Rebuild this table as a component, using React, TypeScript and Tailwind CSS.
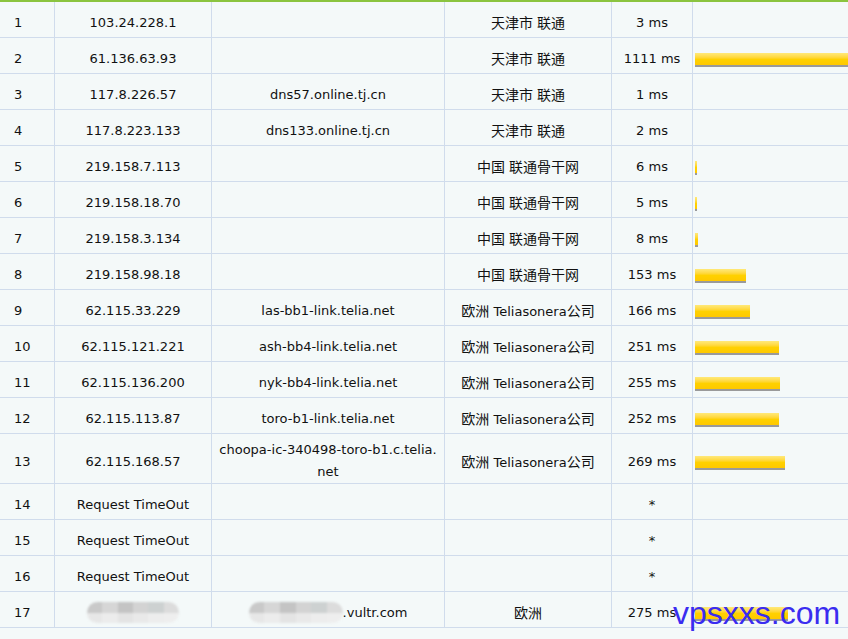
import React from "react";

type Row = { n: number; ip: React.ReactNode; host: React.ReactNode; loc: string; ms: number | null; tall?: boolean };

const rows: Row[] = [
  { n: 1, ip: "103.24.228.1", host: "", loc: "天津市 联通", ms: 3 },
  { n: 2, ip: "61.136.63.93", host: "", loc: "天津市 联通", ms: 1111 },
  { n: 3, ip: "117.8.226.57", host: "dns57.online.tj.cn", loc: "天津市 联通", ms: 1 },
  { n: 4, ip: "117.8.223.133", host: "dns133.online.tj.cn", loc: "天津市 联通", ms: 2 },
  { n: 5, ip: "219.158.7.113", host: "", loc: "中国 联通骨干网", ms: 6 },
  { n: 6, ip: "219.158.18.70", host: "", loc: "中国 联通骨干网", ms: 5 },
  { n: 7, ip: "219.158.3.134", host: "", loc: "中国 联通骨干网", ms: 8 },
  { n: 8, ip: "219.158.98.18", host: "", loc: "中国 联通骨干网", ms: 153 },
  { n: 9, ip: "62.115.33.229", host: "las-bb1-link.telia.net", loc: "欧洲 Teliasonera公司", ms: 166 },
  { n: 10, ip: "62.115.121.221", host: "ash-bb4-link.telia.net", loc: "欧洲 Teliasonera公司", ms: 251 },
  { n: 11, ip: "62.115.136.200", host: "nyk-bb4-link.telia.net", loc: "欧洲 Teliasonera公司", ms: 255 },
  { n: 12, ip: "62.115.113.87", host: "toro-b1-link.telia.net", loc: "欧洲 Teliasonera公司", ms: 252 },
  {
    n: 13,
    ip: "62.115.168.57",
    host: (
      <>
        choopa-ic-340498-toro-b1.c.telia.
        <br />
        net
      </>
    ),
    loc: "欧洲 Teliasonera公司",
    ms: 269,
    tall: true,
  },
  { n: 14, ip: "Request TimeOut", host: "", loc: "", ms: null },
  { n: 15, ip: "Request TimeOut", host: "", loc: "", ms: null },
  { n: 16, ip: "Request TimeOut", host: "", loc: "", ms: null },
];

function Cjk({ text }: { text: string }) {
  const parts = text.split(/([\u4e00-\u9fff]+)/).filter((p) => p.length > 0);
  return (
    <span className="whitespace-pre">
      {parts.map((p, i) =>
        /[\u4e00-\u9fff]/.test(p) ? (
          <span key={i} className="text-[14px]" style={{ fontFamily: '"Noto Sans CJK SC", sans-serif' }}>
            {p}
          </span>
        ) : (
          <span key={i}>{p}</span>
        )
      )}
    </span>
  );
}

function Bar({ ms }: { ms: number }) {
  const w = Math.max(1, Math.round(ms / 3));
  return (
    <div
      className="h-[14px] border-b-[2px] border-[#9a9a9a] bg-gradient-to-b from-[#ffe978] via-[#ffd200] to-[#ffc800]"
      style={{ width: w }}
    />
  );
}

function Blur({ w }: { w: number }) {
  const top = ["#c9c9c9", "#d6d6d6", "#c4c4c4", "#d3d3d3", "#cdd1d1", "#dcdcdc"];
  const bot = ["#e7e7e7", "#ececec", "#e4e4e4", "#e9e9e9", "#ededed", "#eeeeee"];
  return (
    <div className="flex flex-col overflow-hidden rounded-full blur-[1px]" style={{ width: w }}>
      <div className="flex h-[11px]">
        {top.map((c, i) => (
          <div key={i} className="flex-1" style={{ background: c }} />
        ))}
      </div>
      <div className="flex h-[10px]">
        {bot.map((c, i) => (
          <div key={i} className="flex-1" style={{ background: c }} />
        ))}
      </div>
    </div>
  );
}

const base = "flex items-center justify-center border-r border-b border-[#d0dcec] pb-0 leading-[22px] text-center";
const cell = `${base} pt-[6px]`;

export default function App() {
  return (
    <div
      className="relative w-[848px] h-[639px] overflow-hidden bg-[#f4f9f9] text-[13px] text-[#111]"
      style={{ fontFamily: '"DejaVu Sans", "Noto Sans CJK SC", sans-serif' }}
    >
      <div className="h-[2px] bg-[#8bc43f]" />
      <div className="grid w-[900px] grid-cols-[55px_157px_233px_167px_81px_1fr]">
        {rows.map((r) => (
          <React.Fragment key={r.n}>
            <div className={`${cell} justify-start pl-[14px] ${r.tall ? "min-h-[50px]" : "min-h-[36px]"}`}>{r.n}</div>
            <div className={cell}>{r.ip}</div>
            <div className={`${r.tall ? `${base} pt-[5px]` : cell} px-[4px]`}>{r.host}</div>
            <div className={cell}>
              <Cjk text={r.loc} />
            </div>
            <div className={cell}>{r.ms === null ? "*" : `${r.ms} ms`}</div>
            <div className={`${base} justify-start pl-[2px] pt-[9px]`}>{r.ms !== null && r.ms > 3 ? <Bar ms={r.ms} /> : null}</div>
          </React.Fragment>
        ))}
        <div className={`${cell} justify-start pl-[14px] min-h-[36px]`}>17</div>
        <div className={cell}>
          <Blur w={92} />
        </div>
        <div className={cell}>
          <Blur w={94} />
          <span>.vultr.com</span>
        </div>
        <div className={cell}>
          <Cjk text="欧洲" />
        </div>
        <div className={cell}>275 ms</div>
        <div className={`${base} justify-start pl-[2px] pt-[9px]`}>
          <Bar ms={280} />
        </div>
      </div>
      <div
        className="absolute left-[673px] top-[597px] text-[32px] leading-[32px] text-[#3a2cf0]"
        style={{ fontFamily: '"Liberation Sans", Arial, sans-serif' }}
      >
        vpsxxs.com
      </div>
    </div>
  );
}
